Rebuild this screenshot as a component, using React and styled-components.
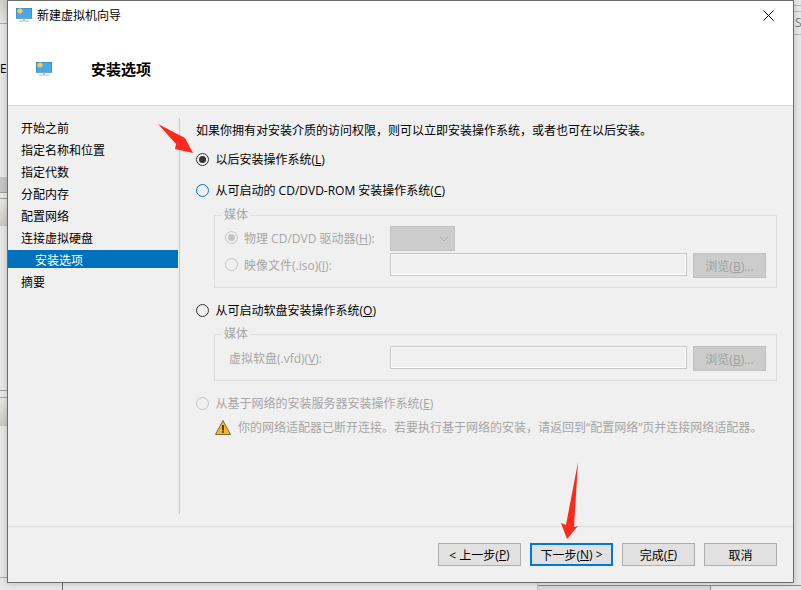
import React from 'react';
import styled, { createGlobalStyle } from 'styled-components';

const GlobalStyle = createGlobalStyle`
  html, body {
    margin: 0;
    padding: 0;
    background: #e6e6e6;
  }
  body {
    font-family: 'Open Sans', 'Noto Sans CJK SC', sans-serif;
    font-size: 12px;
  }
`;

const Desktop = styled.div`
  position: relative;
  width: 801px;
  height: 590px;
  overflow: hidden;
  background: #e6e6e6;
`;

/* scraps of the window underneath, peeking out round the dialog */
const Scrap = styled.div`
  position: absolute;
  left: ${(p) => p.$left}px;
  top: ${(p) => p.$top}px;
  width: ${(p) => p.$width}px;
  height: ${(p) => p.$height}px;
  background: ${(p) => p.$bg};
`;

const ScrapText = styled.div`
  position: absolute;
  left: ${(p) => p.$left}px;
  top: ${(p) => p.$top}px;
  line-height: 14px;
  color: ${(p) => p.$color};
`;

const Window = styled.div`
  position: relative;
  box-sizing: border-box;
  margin-left: 7px;
  width: 787px;
  height: 583px;
  background: #f0f0f0;
  border: 1px solid #6d6d6d;
  box-shadow: 0 0 6px rgba(0, 0, 0, 0.2);
  display: flex;
  flex-direction: column;
`;

const Header = styled.div`
  height: 105px;
  flex: none;
  box-sizing: border-box;
  background: #fff;
  border-bottom: 1px solid #dadada;
`;

const TitleBar = styled.div`
  height: 28px;
  display: flex;
  align-items: center;
  padding: 0 14px 0 8px;
  color: #000;
  svg {
    margin-right: 5px;
  }
`;

const CloseButton = styled.div`
  margin-left: auto;
  display: flex;
`;

const Banner = styled.div`
  display: flex;
  align-items: center;
  padding: 30px 0 0 28px;
  svg {
    margin-right: 39px;
  }
`;

const BannerTitle = styled.div`
  font-size: 15px;
  font-weight: 700;
  line-height: 20px;
  color: #000;
`;

const Main = styled.div`
  height: 420px;
  flex: none;
  box-sizing: border-box;
  padding: 12px 0;
  display: flex;
`;

const Sidebar = styled.div`
  width: 172px;
  flex: none;
  box-sizing: border-box;
  border-right: 1px solid #c9c9c9;
`;

const NavItem = styled.div`
  height: 18px;
  line-height: 21px;
  margin: 0 1px 4px 0;
  padding-left: ${(p) => (p.$sub ? 27 : 13)}px;
  background: ${(p) => (p.$active ? '#0071bc' : 'transparent')};
  color: ${(p) => (p.$active ? '#fff' : '#000')};
`;

const Pane = styled.div`
  flex: 1;
  padding: 3px 17px 0 16px;
`;

const Intro = styled.div`
  height: 18px;
  line-height: 20px;
  color: #000;
`;

const RadioRow = styled.div`
  height: 18px;
  display: flex;
  align-items: center;
  gap: 6px;
  margin-top: ${(p) => p.$top || 0}px;
  padding-left: 0;
  color: ${(p) => (p.$disabled ? '#a6a6a6' : '#000')};
  span + span {
    margin-left: 0.5px;
  }
`;

const Radio = styled.span`
  position: relative;
  width: 13px;
  height: 13px;
  flex: none;
  box-sizing: border-box;
  border-radius: 50%;
  border: 1px solid ${(p) => p.$color};
  &::after {
    content: '';
    display: ${(p) => (p.$checked ? 'block' : 'none')};
    position: absolute;
    inset: 2px;
    border-radius: 50%;
    background: ${(p) => p.$color};
  }
`;

const GroupBox = styled.fieldset`
  margin: ${(p) => p.$top}px 0 0 18px;
  padding: 4px 10px 9px;
  min-width: 0;
  border: 1px solid #dcdcdc;
`;

const GroupLegend = styled.legend`
  margin-left: -4px;
  padding: 0 3px;
  line-height: 14px;
  color: #a6a6a6;
`;

const FieldRow = styled.div`
  display: flex;
  align-items: flex-start;
  margin-top: ${(p) => p.$top || 0}px;
`;

const FieldLabel = styled.div`
  width: 165px;
  height: 23px;
  flex: none;
  padding-left: ${(p) => p.$indent || 0}px;
  box-sizing: border-box;
  display: flex;
  align-items: center;
  gap: 6px;
  color: #a6a6a6;
`;

const Select = styled.div`
  width: 65px;
  height: 25px;
  box-sizing: border-box;
  background: #cccccc;
  border: 1px solid #c2c2c2;
  display: flex;
  align-items: center;
  justify-content: flex-end;
  padding-right: 5px;
`;

const TextBox = styled.div`
  width: 297px;
  height: 23px;
  box-sizing: border-box;
  background: #f0f0f0;
  border: 1px solid #c6c6c6;
  box-shadow: inset -1px -1px 0 #fff, inset 1px 1px 0 #f8f8f8;
`;

const BrowseButton = styled.div`
  width: 73px;
  height: 25px;
  margin-left: 6px;
  box-sizing: border-box;
  background: #cccccc;
  border: 1px solid #bfbfbf;
  color: #a0a0a0;
  display: flex;
  align-items: center;
  justify-content: center;
`;

const WarningRow = styled.div`
  height: 18px;
  margin: 6px 0 0 19px;
  display: flex;
  align-items: center;
  gap: 7px;
  color: #a6a6a6;
  white-space: nowrap;
`;

const Footer = styled.div`
  flex: 1;
  border-top: 1px solid #dcdcdc;
  display: flex;
  justify-content: flex-end;
  align-items: flex-start;
  gap: 9px;
  padding: 16px 16px 0 0;
`;

const WizardButton = styled.div`
  width: ${(p) => p.$width}px;
  height: 23px;
  box-sizing: border-box;
  background: #e1e1e1;
  border: ${(p) => (p.$focused ? '2px solid #0078d7' : '1px solid #adadad')};
  color: #000;
  display: flex;
  align-items: center;
  justify-content: center;
  white-space: pre;
`;

const Annotation = styled.svg`
  position: absolute;
  left: 0;
  top: 0;
  pointer-events: none;
`;

const MonitorIcon = ({ size }) => (
  <svg width={size} height={size} viewBox="0 0 16 16">
    <rect x="0" y="1" width="16" height="10.5" fill="#4aa8e6" />
    <rect x="0.25" y="1.25" width="15.5" height="10" fill="none" stroke="#2c7fc0" strokeWidth="0.5" />
    <circle cx="4" cy="4" r="2.6" fill="#f7b52c" />
    <path d="M1 4h6M4 1.2v5.6M2 2l4 4M6 2L2 6" stroke="#fbd779" strokeWidth="0.6" />
    <rect x="7" y="11.5" width="2" height="2" fill="#9ab4c4" />
    <rect x="3" y="13.5" width="10" height="1.2" fill="#b9c6cf" />
  </svg>
);

const navItems = ['开始之前', '指定名称和位置', '指定代数', '分配内存', '配置网络', '连接虚拟硬盘'];

export default function App() {
  return (
    <Desktop>
      <GlobalStyle />
      <Scrap $left={0} $top={0} $width={7} $height={23} $bg="linear-gradient(#cfcdc8, #e4e3e0)" />
      <Scrap $left={0} $top={23} $width={7} $height={1} $bg="#a8a8a8" />
      <ScrapText $left={0} $top={62} $color="#000">E</ScrapText>
      <Scrap $left={0} $top={177} $width={7} $height={15} $bg="#c4c4c4" />
      <Scrap $left={0} $top={192} $width={7} $height={1} $bg="#9a9a9a" />
      <Scrap $left={0} $top={198} $width={7} $height={1} $bg="#9a9a9a" />
      <Scrap $left={0} $top={200} $width={7} $height={26} $bg="linear-gradient(#e8e7e4, #c9c7c2)" />
      <Scrap $left={0} $top={390} $width={7} $height={1} $bg="#a0a0a0" />
      <Scrap $left={0} $top={397} $width={7} $height={1} $bg="#a0a0a0" />
      <Scrap $left={0} $top={398} $width={7} $height={28} $bg="linear-gradient(#e8e7e4, #c9c7c2)" />
      <Scrap $left={0} $top={577} $width={7} $height={1} $bg="#a8a8a8" />
      <Scrap $left={794} $top={5} $width={7} $height={1} $bg="#b8b8b8" />
      <Scrap $left={794} $top={11} $width={7} $height={1} $bg="#b8b8b8" />
      <ScrapText $left={795} $top={16} $color="#777">S</ScrapText>
      <Scrap $left={794} $top={34} $width={7} $height={1} $bg="#b8b8b8" />
      <Scrap $left={62} $top={583} $width={1} $height={7} $bg="#6d6d6d" />
      <Scrap $left={537} $top={583} $width={1} $height={7} $bg="#c4c4c4" />
      <Scrap $left={538} $top={586} $width={173} $height={4} $bg="#d8d8d8" />
      <Scrap $left={538} $top={585} $width={263} $height={1} $bg="#8a8a8a" />
      <Scrap $left={710} $top={585} $width={1} $height={5} $bg="#8a8a8a" />
      <Window>
        <Header>
          <TitleBar>
            <MonitorIcon size={16} />
            新建虚拟机向导
            <CloseButton>
              <svg width="11" height="11" viewBox="0 0 11 11">
                <path d="M0.5 0.5L10.5 10.5M10.5 0.5L0.5 10.5" stroke="#000" strokeWidth="1" />
              </svg>
            </CloseButton>
          </TitleBar>
          <Banner>
            <MonitorIcon size={16} />
            <BannerTitle>安装选项</BannerTitle>
          </Banner>
        </Header>
        <Main>
          <Sidebar>
            {navItems.map((item) => (
              <NavItem key={item}>{item}</NavItem>
            ))}
            <NavItem $sub $active>安装选项</NavItem>
            <NavItem>摘要</NavItem>
          </Sidebar>
          <Pane>
            <Intro>如果你拥有对安装介质的访问权限，则可以立即安装操作系统，或者也可在以后安装。</Intro>
            <RadioRow $top={11}>
              <Radio $checked $color="#333" />
              <span>以后安装操作系统(<u>L</u>)</span>
            </RadioRow>
            <RadioRow $top={13}>
              <Radio $color="#0078d7" />
              <span>从可启动的 CD/DVD-ROM 安装操作系统(<u>C</u>)</span>
            </RadioRow>
            <GroupBox $top={9}>
              <GroupLegend>媒体</GroupLegend>
              <FieldRow>
                <FieldLabel>
                  <Radio $checked $color="#c4c4c4" />
                  <span>物理 CD/DVD 驱动器(<u>H</u>):</span>
                </FieldLabel>
                <Select>
                  <svg width="10" height="6" viewBox="0 0 10 6">
                    <path d="M1 1l4 4 4-4" fill="none" stroke="#a8a8a8" />
                  </svg>
                </Select>
              </FieldRow>
              <FieldRow $top={2}>
                <FieldLabel>
                  <Radio $color="#c4c4c4" />
                  <span>映像文件(.iso)(<u>I</u>):</span>
                </FieldLabel>
                <TextBox />
                <BrowseButton><span>浏览(<u>B</u>)...</span></BrowseButton>
              </FieldRow>
            </GroupBox>
            <RadioRow $top={13}>
              <Radio $color="#333" />
              <span>从可启动软盘安装操作系统(<u>O</u>)</span>
            </RadioRow>
            <GroupBox $top={8}>
              <GroupLegend>媒体</GroupLegend>
              <FieldRow $top={1}>
                <FieldLabel $indent={4}>
                  <span>虚拟软盘(.vfd)(<u>V</u>):</span>
                </FieldLabel>
                <TextBox />
                <BrowseButton><span>浏览(<u>B</u>)...</span></BrowseButton>
              </FieldRow>
            </GroupBox>
            <RadioRow $top={13} $disabled>
              <Radio $color="#c4c4c4" />
              <span>从基于网络的安装服务器安装操作系统(<u>E</u>)</span>
            </RadioRow>
            <WarningRow>
              <svg width="16" height="15" viewBox="0 0 16 15">
                <path d="M8 0.5L15.5 14.5H0.5Z" fill="#f5b52a" stroke="#5f5030" strokeWidth="0.8" strokeLinejoin="round" />
                <rect x="7.2" y="5" width="1.6" height="5.5" fill="#222" />
                <rect x="7.2" y="11.2" width="1.6" height="1.6" fill="#222" />
              </svg>
              <span>你的网络适配器已断开连接。若要执行基于网络的安装，请返回到“配置网络”页并连接网络适配器。</span>
            </WarningRow>
          </Pane>
        </Main>
        <Footer>
          <WizardButton $width={83}>{'< 上一步('}<u>P</u>)</WizardButton>
          <WizardButton $width={83} $focused>下一步(<u>N</u>){' >'}</WizardButton>
          <WizardButton $width={73}>完成(<u>F</u>)</WizardButton>
          <WizardButton $width={73}>取消</WizardButton>
        </Footer>
      </Window>
      <Annotation width="801" height="590" viewBox="0 0 801 590">
        <path d="M158 124L185 138L193 153L175 149L176 144Z" fill="#fb2a1c" />
        <path d="M578 462L574 527L578 526L567 539L561 523L566 525Z" fill="#fb2a1c" />
      </Annotation>
    </Desktop>
  );
}
